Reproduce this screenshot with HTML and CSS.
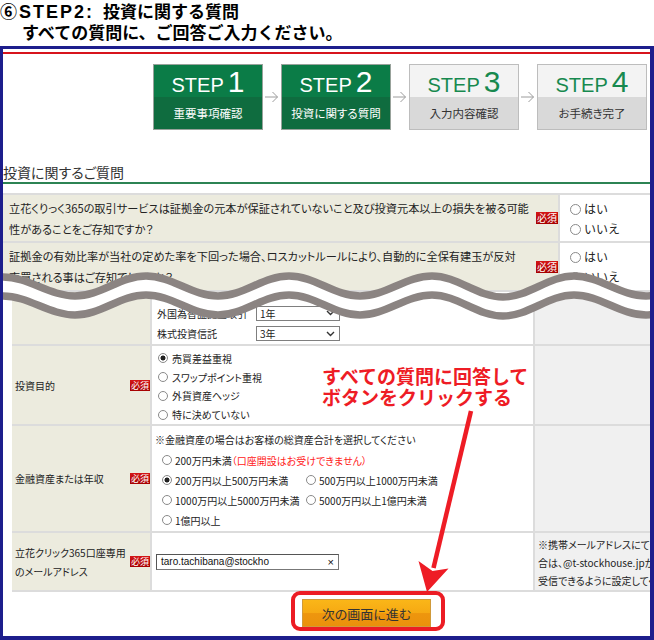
FILE: index.html
```html
<!DOCTYPE html>
<html lang="ja">
<head>
<meta charset="utf-8">
<title>STEP2 投資に関する質問</title>
<link rel="stylesheet" href="styles.css">
</head>
<body>
<div class="title">
  <div class="t1"><span class="num">⑥</span><span class="lat">STEP2:</span> 投資に関する質問</div>
  <div class="t2">すべての質問に、ご回答ご入力ください。</div>
</div>
<div class="frame">
  <div class="redline"></div>
  <div class="steps">
    <div class="step on"><div class="st"><span class="sw">STEP</span><span class="sn">1</span></div><div class="sl">重要事項確認</div></div>
    <div class="arr"><svg width="14" height="12" viewBox="0 0 14 12"><path d="M0 6H12.5M7.5 1L12.5 6L7.5 11" fill="none" stroke="#9c9c9c" stroke-width="1"/></svg></div>
    <div class="step on"><div class="st"><span class="sw">STEP</span><span class="sn">2</span></div><div class="sl">投資に関する質問</div></div>
    <div class="arr"><svg width="14" height="12" viewBox="0 0 14 12"><path d="M0 6H12.5M7.5 1L12.5 6L7.5 11" fill="none" stroke="#9c9c9c" stroke-width="1"/></svg></div>
    <div class="step off"><div class="st"><span class="sw">STEP</span><span class="sn">3</span></div><div class="sl">入力内容確認</div></div>
    <div class="arr"><svg width="14" height="12" viewBox="0 0 14 12"><path d="M0 6H12.5M7.5 1L12.5 6L7.5 11" fill="none" stroke="#9c9c9c" stroke-width="1"/></svg></div>
    <div class="step off"><div class="st"><span class="sw">STEP</span><span class="sn">4</span></div><div class="sl">お手続き完了</div></div>
  </div>

  <h2 class="heading">投資に関するご質問</h2>

  <div class="qtable">
    <div class="q r1"><div class="qt">立花くりっく365の取引サービスは証拠金の元本が保証されていないこと及び投資元本以上の損失を被る可能<br>性があることをご存知ですか？</div><span class="badge">必須</span></div>
    <div class="a"><div class="ar"><i class="rb"></i>はい</div><div class="ar"><i class="rb"></i>いいえ</div></div>
    <div class="q r2"><div class="qt">証拠金の有効比率が当社の定めた率を下回った場合、ロスカットルールにより、自動的に全保有建玉が反対<br>売買される事はご存知でしょうか？</div><span class="badge">必須</span></div>
    <div class="a"><div class="ar"><i class="rb"></i>はい</div><div class="ar"><i class="rb"></i>いいえ</div></div>
  </div>

  <div class="ftable">
    <div class="fl ra"></div>
    <div class="fc ra">
      <div class="ln"><span class="lbl">外国為替証拠金取引</span><span class="sel">1年<svg width="9" height="6" viewBox="0 0 9 6"><path d="M1 1L4.5 4.5L8 1" fill="none" stroke="#333" stroke-width="1.4"/></svg></span></div>
      <div class="ln"><span class="lbl">株式投資信託</span><span class="sel">3年<svg width="9" height="6" viewBox="0 0 9 6"><path d="M1 1L4.5 4.5L8 1" fill="none" stroke="#333" stroke-width="1.4"/></svg></span></div>
    </div>
    <div class="fr"></div>

    <div class="fl rb2"><span>投資目的</span><span class="badge sm">必須</span></div>
    <div class="fc rb2">
      <div class="ro"><i class="rb s on"></i>売買差益重視</div>
      <div class="ro"><i class="rb s"></i>スワップポイント重視</div>
      <div class="ro"><i class="rb s"></i>外貨資産ヘッジ</div>
      <div class="ro"><i class="rb s"></i>特に決めていない</div>
    </div>
    <div class="fr"></div>

    <div class="fl rc3"><span>金融資産または年収</span><span class="badge sm">必須</span></div>
    <div class="fc rc3">
      <div class="nt">※金融資産の場合はお客様の総資産合計を選択してください</div>
      <div class="rc"><span class="it"><i class="rb s"></i>200万円未満</span><span class="red">（口座開設はお受けできません）</span></div>
      <div class="rc grid"><span class="it"><i class="rb s on"></i>200万円以上500万円未満</span><span class="it"><i class="rb s"></i>500万円以上1000万円未満</span></div>
      <div class="rc grid"><span class="it"><i class="rb s"></i>1000万円以上5000万円未満</span><span class="it"><i class="rb s"></i>5000万円以上1億円未満</span></div>
      <div class="rc"><span class="it"><i class="rb s"></i>1億円以上</span></div>
    </div>
    <div class="fr"></div>

    <div class="fl rd4"><span class="two">立花クリック365口座専用<br>のメールアドレス</span><span class="badge sm">必須</span></div>
    <div class="fc rd4"><div class="inp"><span>taro.tachibana@stockho</span><span class="x">×</span></div></div>
    <div class="fr rd4t">※携帯メールアドレスにて登録される場<br>合は、@t-stockhouse.jpからのメールを<br>受信できるように設定してください。</div>
  </div>

  <div class="cta-row"><div class="cta"><button class="next" type="button">次の画面に進む</button></div></div>

  <div class="note">すべての質問に回答して<br>ボタンをクリックする</div>

  <svg class="overlay" width="647" height="587" viewBox="3 49 647 587">
    <defs>
      <path id="wave" d="M -68 296 C -42.3 296, -22.7 277, 3 277 C 28.7 277, 49.3 296, 75 296 C 100.7 296, 120.3 276, 146 276 C 171.7 276, 192.3 296, 218 296 C 243.7 296, 263.3 276, 289 276 C 314.7 276, 334.3 296, 360 296 C 385.7 296, 406.3 276, 432 276 C 457.7 276, 477.3 297, 503 297 C 528.7 297, 548.3 276, 574 276 C 599.7 276, 620.3 296, 646 296 C 671.7 296, 691.3 276, 717 276" fill="none"/>
    </defs>
    <use href="#wave" transform="translate(0 9.5)" stroke="#ffffff" stroke-width="13"/>
    <use href="#wave" stroke="#8b8482" stroke-width="7.5"/>
    <use href="#wave" transform="translate(0 19)" stroke="#8b8482" stroke-width="7.5"/>
    <line x1="471" y1="411" x2="433.5" y2="568" stroke="#ee1c25" stroke-width="4.5"/>
    <polygon points="427,592 448.5,568.5 432.5,571 418.5,561" fill="#ee1c25"/>
  </svg>
</div>
</body>
</html>
```

FILE: styles.css
```css
* { box-sizing: border-box; margin: 0; padding: 0; }
html, body { width: 654px; height: 640px; overflow: hidden; background: #fff; }
body {
  font-family: "Noto Sans CJK JP", "Noto Sans", sans-serif;
  color: #222;
}

/* page title */
.title { height: 46px; padding-top: 1px; font-weight: 700; font-size: 17px; line-height: 20px; color: #000; white-space: nowrap; }
.t1 .lat { font-family: "Liberation Sans", Arial, sans-serif; font-size: 18px; letter-spacing: 2px; margin-left: 2px; margin-right: 5px; }
.t2 { padding-left: 22px; }

/* frame */
.frame {
  position: relative;
  height: 594px;
  border: 3px solid #1d1e8c;
  border-right-width: 4px;
  border-bottom-width: 4px;
  overflow: hidden;
}
.redline { margin-top: 3px; height: 2px; background: #d7141c; }

/* steps */
.steps { margin-top: 10px; height: 66px; display: flex; align-items: center; padding-left: 150px; }
.step { width: 110px; height: 66px; border: 1px solid #98a29b; }
.st {
  height: 32px; padding-top: 2px;
  display: flex; justify-content: center; align-items: baseline;
  line-height: 30px;
  font-family: "Liberation Sans", Arial, sans-serif;
}
.sw { font-size: 20px; }
.sn { font-size: 30px; margin-left: 4px; }
.sl { height: 32px; line-height: 32px; text-align: center; font-size: 11.5px; font-feature-settings: "palt"; }
.step.on .st { background: #0b7c47; color: #fff; }
.step.on .sl { background: #0f6c3f; color: #fff; }
.step.off { border-color: #bdbdbd; }
.step.off .st { background: #f3f3f3; color: #17894f; }
.step.off .sl { background: #d9d9d9; color: #333; }
.arr { width: 18px; display: flex; justify-content: center; }
.arr svg { display: block; }

/* heading */
.heading {
  margin-top: 32px;
  font-size: 14px; font-weight: 400; line-height: 20px; color: #333;
  font-feature-settings: "palt";
  border-bottom: 2px solid #2c8353;
}

/* question table */
.qtable {
  margin-top: 9px;
  display: grid;
  grid-template-columns: 555px 90px;
  grid-template-rows: 46px 47px;
  gap: 2px;
  padding-top: 2px;
  background: #dcdcdc;
}
.q { background: #ecebde; display: flex; align-items: center; padding-left: 6px; }
.qt {
  flex: 1; align-self: flex-start;
  padding-top: 3px;
  font-size: 11.2px; line-height: 21px; white-space: nowrap; overflow: hidden;
  font-feature-settings: "palt";
  color: #222;
}
.a { background: #fff; padding: 4px 0 0 10px; font-size: 12px; line-height: 20px; }
.ar { display: flex; align-items: center; height: 20px; }

.badge {
  display: inline-block; flex: none;
  width: 22px; height: 12px;
  font-size: 10px; line-height: 12px; text-align: center; color: #fff;
  background: linear-gradient(#d41616, #a50000);
  font-feature-settings: "palt";
}
.badge.sm { width: 20px; height: 11px; font-size: 9px; line-height: 11px; }

/* radio */
.rb {
  display: inline-block; flex: none;
  width: 11px; height: 11px; margin-right: 3px;
  border: 1px solid #8a8a8a; border-radius: 50%;
  background: #fff;
}
.rb.s { width: 10px; height: 10px; }
.rb.on { background: radial-gradient(circle, #222 0, #222 2.2px, #fff 2.8px); }

/* form table */
.ftable {
  margin-left: 9px;
  width: 638px;
  display: grid;
  grid-template-columns: 138px 381px 115px;
  grid-template-rows: 52px 78px 105px 57px;
  gap: 2px;
  padding: 2px 0;
  background: #dcdcdc;
  font-size: 10px;
  font-feature-settings: "palt";
}
.fl {
  background: #ecebde;
  display: flex; align-items: center; justify-content: space-between;
  padding-left: 3px;
  color: #222;
}
.two { line-height: 19px; }
.fc { background: #fff; color: #222; display: flex; flex-direction: column; align-items: flex-start; }
.fr { background: #f0f0f0; }

.fc.ra { padding: 11px 0 0 5px; }
.ln { display: flex; align-items: center; height: 20.5px; }
.lbl { width: 99px; white-space: nowrap; overflow: hidden; }
.sel {
  width: 84px; height: 15px;
  border: 1px solid #7f7f7f;
  display: flex; align-items: center; justify-content: space-between;
  padding: 0 4px 0 3px;
  background: #fff;
}

.fc.rb2 { padding: 3px 0 0 6px; }
.ro { display: flex; align-items: center; height: 19px; }
.ro .rb { margin-right: 4px; }

.fc.rc3 { padding: 4px 0 0 3px; }
.nt { height: 20px; line-height: 20px; white-space: nowrap; }
.rc { display: flex; align-items: center; height: 20px; margin-left: 7px; white-space: nowrap; }
.rc.grid { display: grid; grid-template-columns: 144px auto; align-items: center; }
.it { display: flex; align-items: center; }
.red { color: #ff2020; }

.fc.rd4 { flex-direction: row; align-items: center; padding-left: 4px; }
.inp {
  width: 183px; height: 16px;
  border: 1px solid #777; border-top-color: #555; border-left-color: #555;
  display: flex; align-items: center; justify-content: space-between;
  padding: 0 4px;
  font-family: "Liberation Sans", Arial, sans-serif; font-size: 10px; color: #111;
}
.x { font-size: 11px; }
.rd4t { padding: 3px 0 0 3px; line-height: 18px; white-space: nowrap; overflow: hidden; color: #222; }

/* call to action */
.cta-row { margin-top: -1px; padding-left: 288px; }
.cta {
  display: inline-block;
  height: 40px;
  border: 4px solid #ec1c24;
  border-radius: 9px;
  padding: 4px 10px 0 7px;
}
.next {
  display: block;
  width: 129px; height: 28px;
  border: 1px solid #d09a3a;
  background: linear-gradient(#fab618 0%, #f6a913 50%, #ee960e 52%, #ea910c 100%);
  font-family: "Noto Sans CJK JP", sans-serif; font-size: 13px; color: #333;
  font-feature-settings: "palt";
}

/* annotation */
.note {
  position: absolute; left: 319px; top: 316px;
  font-size: 19px; font-weight: 700; line-height: 21px;
  color: #ee1c25; white-space: nowrap;
}
.overlay { position: absolute; left: 0; top: 0; pointer-events: none; }
```
